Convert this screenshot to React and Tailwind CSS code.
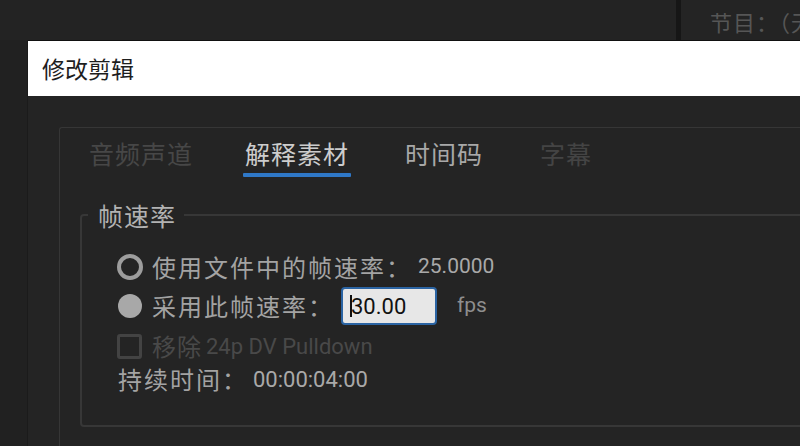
const cjk = { fontFamily: '"Noto Sans CJK SC", "Noto Sans", sans-serif' };
const latin = { fontFamily: 'Roboto, "Noto Sans CJK SC", sans-serif' };

function Tab({ label, active = false, tone, className = "" }) {
  return (
    <div className={`flex flex-col ${className}`}>
      <span className={`text-[25px] leading-[34px] tracking-[1px] ${tone}`} style={cjk}>
        {label}
      </span>
      <div className={`mt-[3px] h-[4px] -mx-[2px] rounded-[1px] ${active ? "bg-[#2f78c8]" : "bg-transparent"}`} />
    </div>
  );
}

export default function App() {
  return (
    <div className="w-[800px] h-[446px] overflow-hidden bg-[#222222] flex flex-col" style={cjk}>
      {/* background strip behind the dialog */}
      <div className="h-[40px] flex shrink-0">
        <div className="w-[676px] bg-[#232323]" />
        <div className="w-[5px] bg-[#161616]" />
        <div className="flex-1 bg-[#242424] pl-[29px] pt-[6px] whitespace-nowrap overflow-hidden">
          <span className="text-[22px] leading-[30px] text-[#565656] tracking-[1px]">节目：（无</span>
        </div>
      </div>

      <div className="flex-1 flex min-h-0">
        <div className="w-[28px] shrink-0 bg-[#212121] border-r border-[#1b1b1b]" />
        <div className="flex-1 flex flex-col min-w-0">
          {/* title bar */}
          <div className="h-[56px] shrink-0 bg-white border-t border-[#111111] flex items-center pl-[14px]">
            <span className="text-[23px] text-[#1e1e1e] leading-none">修改剪辑</span>
          </div>

          {/* dialog body */}
          <div className="flex-1 bg-[#242424] pl-[31px] pt-[31px] overflow-hidden">
            <div className="w-[800px] h-[400px] border-l border-t border-[#363636] rounded-tl-[3px] pl-[29px] pt-[8px]">
              <div className="flex">
                <Tab label="音频声道" tone="text-[#474747]" />
                <Tab label="解释素材" tone="text-[#cdcdcd]" active className="ml-[52px]" />
                <Tab label="时间码" tone="text-[#a8a8a8]" className="ml-[56px]" />
                <Tab label="字幕" tone="text-[#444444]" className="ml-[57px]" />
              </div>

              <fieldset className="-ml-[9px] mt-[23px] w-[800px] h-[227px] border-2 border-[#373737] rounded-[4px] p-0 m-0">
                <legend className="ml-[6px] pl-[10px] pr-[8px] text-[25px] leading-[30px] text-[#b2b2b2] tracking-[1px]">
                  帧速率
                </legend>
                <div className="pl-[35px] pt-[18px] flex flex-col text-[#a3a3a3]">
                  <div className="h-[38px] flex items-center">
                    <div className="w-[26px] h-[26px] rounded-full border-[4px] border-[#9d9d9d] mr-[9px] shrink-0" />
                    <span className="text-[24px] tracking-[2px]">使用文件中的帧速率：</span>
                    <span className="ml-[6px] text-[21px] text-[#a9a9a9]" style={latin}>25.0000</span>
                  </div>
                  <div className="h-[40px] flex items-center">
                    <div className="w-[24px] h-[24px] rounded-full bg-[#a8a8a8] ml-[1px] mr-[10px] shrink-0" />
                    <span className="text-[24px] tracking-[2px]">采用此帧速率：</span>
                    <div className="ml-[7px] w-[96px] h-[38px] rounded-[4px] border-2 border-[#2b64a3] bg-[#e7e7e7] flex items-center pl-[7px]">
                      <div className="w-[2px] h-[22px] bg-[#111111]" />
                      <span className="text-[22px] text-[#111111] -ml-[1px]" style={latin}>30.00</span>
                    </div>
                    <span className="ml-[20px] text-[21px] text-[#8e8e8e]" style={latin}>fps</span>
                  </div>
                  <div className="h-[40px] flex items-center text-[#494949]">
                    <div className="w-[25px] h-[25px] rounded-[3px] border-[3px] border-[#434343] mr-[10px] shrink-0" />
                    <span className="text-[24px] tracking-[1px]">移除</span>
                    <span className="ml-[4px] text-[22px]" style={latin}>24p DV Pulldown</span>
                  </div>
                  <div className="h-[26px] flex items-center">
                    <span className="ml-[1px] text-[24px] tracking-[2px]">持续时间：</span>
                    <span className="ml-[5px] text-[22px] text-[#a9a9a9]" style={latin}>00:00:04:00</span>
                  </div>
                </div>
              </fieldset>
            </div>
          </div>
        </div>
      </div>
    </div>
  );
}
